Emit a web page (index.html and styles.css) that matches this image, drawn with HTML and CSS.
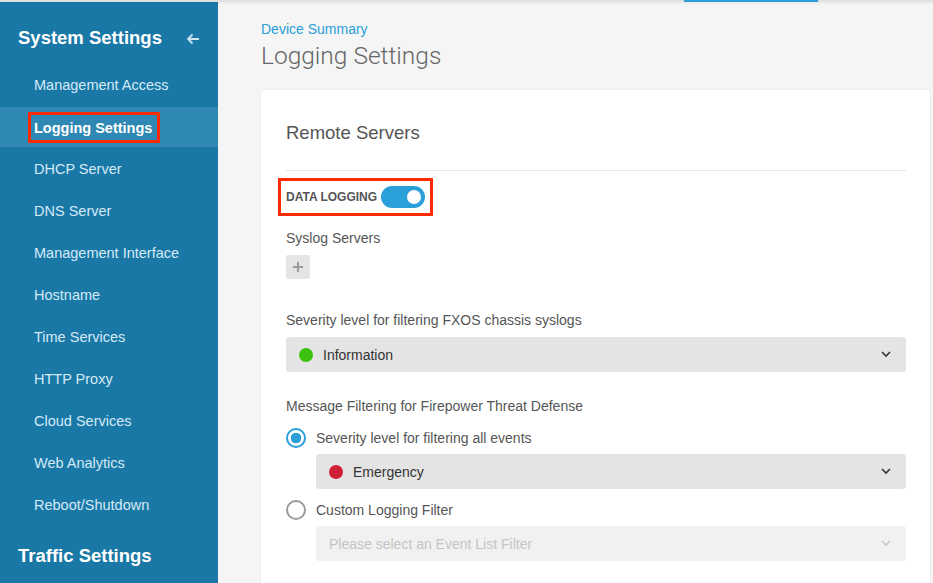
FILE: index.html
```html
<!DOCTYPE html>
<html>
<head>
<meta charset="utf-8">
<link rel="stylesheet" href="styles.css">
</head>
<body>
<div class="topbar"><div class="topbar-tab"></div></div>
<div class="layout">
  <nav class="sidebar">
    <div class="side-head">
      <span class="side-title">System Settings</span>
      <svg class="back" width="14" height="12" viewBox="0 0 14 12"><path d="M13 6H2M6.5 1.5L2 6l4.5 4.5" fill="none" stroke="#cfe4f0" stroke-width="1.8"/></svg>
    </div>
    <ul class="menu">
      <li class="item">Management Access</li>
      <li class="item active"><span class="hl">Logging Settings</span></li>
      <li class="item">DHCP Server</li>
      <li class="item">DNS Server</li>
      <li class="item">Management Interface</li>
      <li class="item">Hostname</li>
      <li class="item">Time Services</li>
      <li class="item">HTTP Proxy</li>
      <li class="item">Cloud Services</li>
      <li class="item">Web Analytics</li>
      <li class="item">Reboot/Shutdown</li>
    </ul>
    <div class="side-title section2">Traffic Settings</div>
  </nav>
  <main class="main">
    <div class="crumb">Device Summary</div>
    <h1 class="page-title">Logging Settings</h1>
    <section class="card">
      <h2 class="card-title">Remote Servers</h2>
      <div class="dl-box">
        <span class="dl-label">DATA LOGGING</span>
        <span class="toggle"><span class="knob"></span></span>
      </div>
      <div class="label syslog">Syslog Servers</div>
      <div class="plus-btn">
        <svg width="10" height="10" viewBox="0 0 10 10"><path d="M5 0v10M0 5h10" stroke="#9a9a9a" stroke-width="2"/></svg>
      </div>
      <div class="label fxos">Severity level for filtering FXOS chassis syslogs</div>
      <div class="select">
        <span class="dot green"></span><span class="sel-text">Information</span>
        <svg class="chev" width="10" height="7" viewBox="0 0 10 7"><path d="M1 1l4 4 4-4" fill="none" stroke="#333" stroke-width="1.6"/></svg>
      </div>
      <div class="label msg">Message Filtering for Firepower Threat Defense</div>
      <div class="radio-row first">
        <span class="radio on"></span><span class="radio-text">Severity level for filtering all events</span>
      </div>
      <div class="select indent">
        <span class="dot red"></span><span class="sel-text">Emergency</span>
        <svg class="chev" width="10" height="7" viewBox="0 0 10 7"><path d="M1 1l4 4 4-4" fill="none" stroke="#333" stroke-width="1.6"/></svg>
      </div>
      <div class="radio-row second">
        <span class="radio"></span><span class="radio-text">Custom Logging Filter</span>
      </div>
      <div class="select indent disabled">
        <span class="sel-text placeholder">Please select an Event List Filter</span>
        <svg class="chev" width="10" height="7" viewBox="0 0 10 7"><path d="M1 1l4 4 4-4" fill="none" stroke="#c8c8c8" stroke-width="1.6"/></svg>
      </div>
    </section>
  </main>
</div>
</body>
</html>
```
FILE: styles.css
```css
* { box-sizing: border-box; }
html, body { margin: 0; padding: 0; }
body {
  width: 933px;
  height: 583px;
  overflow: hidden;
  font-family: "Liberation Sans", Arial, sans-serif;
  background: #f5f5f5;
}
.topbar {
  height: 2px;
  background: #e2e2e2;
  display: flex;
  box-shadow: 0 1px 3px rgba(0,0,0,0.08);
  position: relative;
  z-index: 2;
}
.topbar-tab {
  margin-left: 684px;
  width: 134px;
  height: 2px;
  background: #2a9fd8;
}
.layout {
  display: flex;
  height: 581px;
}
.sidebar {
  width: 218px;
  flex: none;
  background: #1a78a6;
  color: #fff;
}
.side-head {
  height: 63px;
  display: flex;
  align-items: center;
  justify-content: space-between;
  padding: 9px 18px 0 18px;
}
.side-title {
  font-size: 18.5px;
  font-weight: bold;
  color: #fff;
}
.back { margin-top: 1px; }
.menu {
  list-style: none;
  margin: 0;
  padding: 0;
}
.item {
  height: 40px;
  margin-bottom: 2px;
  display: flex;
  align-items: center;
  padding-left: 34px;
  font-size: 14.5px;
  color: #d4eaf6;
}
.item.active {
  background: #2f88b3;
  color: #fff;
  font-weight: bold;
}
.hl {
  outline: 3px solid #ff2a00;
  outline-offset: 3px;
  padding: 2px 2px 1px 0;
  margin-left: 0;
}
.section2 {
  padding: 18px 0 0 18px;
}
.main {
  flex: 1;
  padding: 18px 3px 0 43px;
}
.crumb {
  font-size: 14px;
  color: #2a9fd8;
  line-height: 18px;
}
.page-title {
  margin: 4px 0 0 0;
  font-family: Roboto, "Liberation Sans", sans-serif;
  font-weight: 300;
  font-size: 24.5px;
  line-height: 28px;
  color: #666;
}
.card {
  margin-top: 20px;
  background: #fff;
  border-radius: 4px;
  box-shadow: 0 0 3px rgba(0,0,0,0.07);
  padding: 32px 24px 30px 25px;
  height: 520px;
}
.card-title {
  margin: 0;
  font-size: 18.5px;
  font-weight: normal;
  line-height: 22px;
  color: #555;
  padding-bottom: 26px;
  border-bottom: 1px solid #e6e6e6;
}
.dl-box {
  display: inline-flex;
  align-items: center;
  margin: 7px 0 0 -8px;
  border: 3px solid #ff2a00;
  height: 38px;
  padding: 0 5px 0 5px;
  gap: 4px;
}
.dl-label {
  font-size: 12px;
  font-weight: bold;
  color: #555;
}
.toggle {
  width: 44px;
  height: 22px;
  border-radius: 11px;
  background: #2a9fd8;
  display: flex;
  justify-content: flex-end;
  align-items: center;
  padding-right: 4px;
}
.knob {
  width: 14px;
  height: 14px;
  border-radius: 50%;
  background: #fff;
}
.label {
  font-size: 14px;
  line-height: 18px;
  color: #555;
}
.syslog { margin-top: 13px; }
.plus-btn {
  margin-top: 8px;
  width: 24px;
  height: 24px;
  background: #e5e5e5;
  border-radius: 2px;
  display: flex;
  align-items: center;
  justify-content: center;
}
.fxos { margin-top: 32px; }
.select {
  margin-top: 8px;
  height: 35px;
  background: #e4e4e4;
  border-radius: 3px;
  display: flex;
  align-items: center;
  padding: 0 15px 0 13px;
}
.select.indent { margin-left: 30px; margin-top: 7px; }
.select.disabled { background: #f1f1f1; }
.dot {
  width: 14px;
  height: 14px;
  border-radius: 50%;
  margin-right: 10px;
}
.dot.green { background: #3cc20e; }
.dot.red { background: #d11f35; }
.sel-text {
  flex: 1;
  font-size: 14px;
  color: #333;
}
.sel-text.placeholder { color: #c4c4c4; }
.msg { margin-top: 25px; }
.radio-row {
  display: flex;
  align-items: center;
  height: 18px;
}
.radio-row.first { margin-top: 14px; }
.radio-row.second { margin-top: 12px; }
.radio {
  width: 20px;
  height: 20px;
  border-radius: 50%;
  border: 2px solid #9b9b9b;
  margin-right: 10px;
  flex: none;
}
.radio.on {
  border-color: #2a9fd8;
  background: radial-gradient(circle, #2a9fd8 0 5px, #fff 5.5px);
}
.radio-text {
  font-size: 14px;
  color: #555;
}
```
